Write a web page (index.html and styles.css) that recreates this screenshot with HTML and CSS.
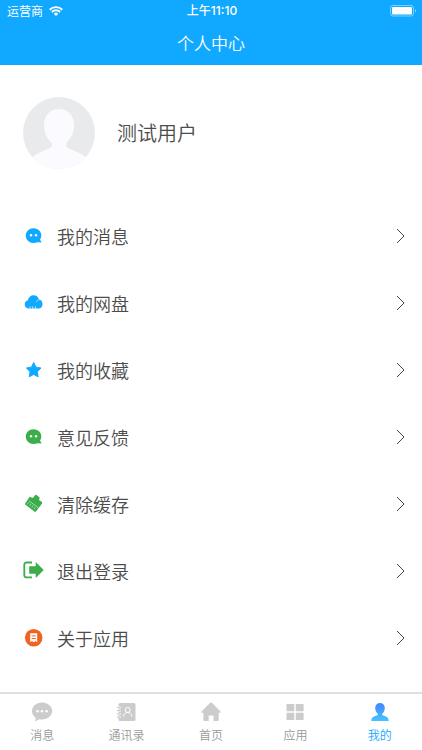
FILE: index.html
```html
<!DOCTYPE html>
<html lang="zh-CN">
<head>
    <meta charset="UTF-8">
    <meta name="viewport" content="width=device-width, initial-scale=1.0">
    <title>个人中心</title>
    <link rel="stylesheet" href="styles.css">
</head>
<body>
    <header>
        <div class="status-bar">
            <div class="carrier">
                <span>运营商</span>
                <svg width="14" height="10" viewBox="0 0 14 10" fill="none" stroke="#fff" stroke-width="1.9">
                    <path d="M.7 3.700a9 9 0 0 1 12.600 0M2.900 6a5.800 5.800 0 0 1 8.200 0"/>
                    <path d="M7 10 4.800 7.700a3.100 3.100 0 0 1 4.400 0z" fill="#fff" stroke="none"/>
                </svg>
            </div>
            <div class="time">上午11:10</div>
            <div class="battery">
                <svg width="27" height="12" viewBox="0 0 27 12">
                    <rect x=".5" y=".5" width="23" height="10.5" rx="2.5" fill="none" stroke="#fff" stroke-opacity=".45"/>
                    <rect x="2" y="2" width="20" height="7.5" rx="1" fill="#fff"/>
                    <path d="M25 4v3.600c1.600-.6 1.600-3 0-3.600z" fill="#fff" fill-opacity=".5"/>
                </svg>
            </div>
        </div>
        <h1>个人中心</h1>
    </header>

    <main>
        <section class="profile">
            <svg class="avatar" viewBox="0 0 72 72">
                <defs>
                    <clipPath id="avatar-clip"><circle cx="36" cy="36" r="36"/></clipPath>
                </defs>
                <g clip-path="url(#avatar-clip)">
                    <rect width="72" height="72" fill="#e8eaeb"/>
                    <path d="M36 12c9 0 15 6.500 15 16 0 7-2.500 13-7 17-2 2.500-1 5 2 6.500 6 3 12 4.500 17 9V72H9V60.500c5-4.500 11-6 17-9 3-1.500 4-4 2-6.500-4.500-4-7-10-7-17 0-9.500 6-16 15-16z" fill="#fbfbff"/>
                </g>
            </svg>
            <h2>测试用户</h2>
        </section>

        <nav class="menu">
            <a href="#">
                <svg class="icon blue" viewBox="0 0 20 20">
                    <path d="M9.500 2.200c4.300 0 7.800 2.900 7.800 7 0 1.900-.6 3.200-1.300 4.300l1.600 3-4.300-.2c-1 .5-2.400.7-3.800.7-4.300 0-7.700-3.300-7.700-7.500s3.400-7.300 7.700-7.300z"/>
                    <circle cx="7" cy="9.200" r="1.200" fill="#fff"/>
                    <circle cx="12" cy="9.200" r="1.200" fill="#fff"/>
                </svg>
                <span>我的消息</span>
                <svg class="arrow" viewBox="0 0 10 16"><path d="M1 1l7 7-7 7"/></svg>
            </a>
            <a href="#">
                <svg class="icon blue" viewBox="0 0 20 20">
                    <path d="M4.800 15.500C2.500 15.500.7 13.700.7 11.200c0-2 1.300-3.600 3.200-4C4.500 4.200 6.700 2.200 9.500 2.200c2.600 0 4.800 1.600 5.500 4.200 2.300.2 3.500 2.400 3.500 4.800 0 2.500-1.600 4.300-3.900 4.300z"/>
                    <path d="M6 13.500v2M8.700 13.500v2M11.400 13.500v2" stroke="#fff" stroke-width=".8"/>
                    <path d="M12.300 9c.5-1.300 1.500-2.200 2.900-2.200" fill="none" stroke="#fff" stroke-width=".6"/>
                </svg>
                <span>我的网盘</span>
                <svg class="arrow" viewBox="0 0 10 16"><path d="M1 1l7 7-7 7"/></svg>
            </a>
            <a href="#">
                <svg class="icon blue" viewBox="0 0 20 20">
                    <path d="M9.700 2.500l2.300 4.700 5 .8-3.700 3.700.8 5.100-4.400-2.400-4.400 2.400.8-5.100L2.400 8l5-.8z" stroke="#10a9ff" stroke-linejoin="round"/>
                </svg>
                <span>我的收藏</span>
                <svg class="arrow" viewBox="0 0 10 16"><path d="M1 1l7 7-7 7"/></svg>
            </a>
            <a href="#">
                <svg class="icon green" viewBox="0 0 20 20">
                    <path d="M9.500 2.200c4.300 0 7.800 2.900 7.800 7 0 1.900-.6 3.200-1.300 4.300l1.600 3-4.300-.2c-1 .5-2.400.7-3.800.7-4.300 0-7.700-3.300-7.700-7.500s3.400-7.300 7.700-7.300z"/>
                    <circle cx="7" cy="9.200" r="1.200" fill="#fff"/>
                    <circle cx="12" cy="9.200" r="1.200" fill="#fff"/>
                </svg>
                <span>意见反馈</span>
                <svg class="arrow" viewBox="0 0 10 16"><path d="M1 1l7 7-7 7"/></svg>
            </a>
            <a href="#">
                <svg class="icon green" viewBox="0 0 20 20">
                    <path d="M5.600 2.800l3.200 1.200 2.500-2.900c.4-.4.9-.4 1.300-.1l2.700 2.200c.4.300.4.600.3 1l-.6 1.900 2.700 1.700c.6.500.7 1.300.2 1.900l-6 7.700c-.4.600-1 .6-1.500.2L1.500 10.800c-.5-.4-.5-1-.1-1.500z"/>
                    <path d="M5 7l9 6.500M4.500 8.500l-1 1.800M6.800 10l-1.200 2M9 11.600l-1.200 2M11.200 13.200l-1.200 2" fill="none" stroke="#fff" stroke-width=".7" stroke-opacity=".75"/>
                </svg>
                <span>清除缓存</span>
                <svg class="arrow" viewBox="0 0 10 16"><path d="M1 1l7 7-7 7"/></svg>
            </a>
            <a href="#">
                <svg class="icon green" viewBox="0 0 20 20">
                    <path d="M8 1.500H2.500A2.200 2.200 0 0 0 .3 3.700v10.500A2.200 2.200 0 0 0 2.500 16.400H8" fill="none" stroke="#3bae4a" stroke-width="1.800"/>
                    <path d="M11.700.9l8 8.100-8 8.100V12.700H5.200V5.300h6.500z"/>
                </svg>
                <span>退出登录</span>
                <svg class="arrow" viewBox="0 0 10 16"><path d="M1 1l7 7-7 7"/></svg>
            </a>
            <a href="#">
                <svg class="icon orange" viewBox="0 0 20 20">
                    <circle cx="9.700" cy="9.700" r="8.800"/>
                    <path d="M6.200 5.200h7v9l-1.800-1.200-1.700 1.200L8 13l-1.800 1.200z" fill="#fff"/>
                    <path d="M7.700 7.900h4M7.700 10.500h4" stroke="#f26322"/>
                </svg>
                <span>关于应用</span>
                <svg class="arrow" viewBox="0 0 10 16"><path d="M1 1l7 7-7 7"/></svg>
            </a>
        </nav>
    </main>

    <footer>
        <a href="#">
            <svg viewBox="0 0 20 20">
                <path d="M10 .5c5.700 0 10.200 3.700 10.200 8.500s-4.500 8.500-10.200 8.500c-1 0-2-.1-3-.3L3.500 19.500v-4C1.300 14 0 11.700 0 9 0 4.200 4.300.5 10 .5z"/>
                <g fill="#fff"><circle cx="5.500" cy="9.200" r="1.300"/><circle cx="10" cy="9.200" r="1.300"/><circle cx="14.500" cy="9.200" r="1.300"/></g>
            </svg>
            <span>消息</span>
        </a>
        <a href="#">
            <svg viewBox="0 0 20 20">
                <rect x="1.500" y="1" width="17" height="18" rx="1.500"/>
                <g fill="none" stroke="#fff">
                    <circle cx="10.700" cy="8" r="2.500"/>
                    <path d="M6.500 14.500c.2-2.500 1.800-4 4.200-4s4 1.500 4.200 4"/>
                </g>
                <path d="M0 5.500h3.500M0 8.700h3.500M0 11.900h3.500M0 15.100h3.500" stroke="#fff" stroke-width="2"/>
                <path d="M0 5.500h3M0 8.700h3M0 11.900h3M0 15.100h3" stroke="#ccc" stroke-width="1.200"/>
            </svg>
            <span>通讯录</span>
        </a>
        <a href="#">
            <svg viewBox="0 0 20 20">
                <path d="M10 .5c.3 0 .6.100.8.300l8.700 8.700c.5.500.2 1.200-.5 1.200h-1.300V18c0 .6-.3 1-.9 1h-4.300v-5.500H7.700V19H3.300c-.6 0-.9-.4-.9-1v-7.300H1c-.7 0-1-.7-.5-1.200L9.200.8c.2-.2.500-.3.800-.3z"/>
            </svg>
            <span>首页</span>
        </a>
        <a href="#">
            <svg viewBox="0 0 20 20">
                <path d="M1.500 2h7.800v7.200H1.500zM10.800 2h7.800v7.200h-7.800zM1.500 10.800h7.800V18H1.500zM10.800 10.800h7.800V18h-7.800z"/>
            </svg>
            <span>应用</span>
        </a>
        <a href="#" class="active">
            <svg viewBox="0 0 20 20">
                <defs>
                    <linearGradient id="me" x1="0" y1="0" x2="0" y2="1">
                        <stop offset="0" stop-color="#4385ff"/>
                        <stop offset="1" stop-color="#45c4ff"/>
                    </linearGradient>
                </defs>
                <path d="M10 1c3 0 4.800 2 4.800 5 0 2.200-.9 4.300-2.400 5.600-.5.900-.2 1.600.8 2 2.500.9 5 1.500 5.600 4.900 0 .3-.2.500-.5.500H1.700c-.3 0-.5-.2-.5-.5.600-3.400 3.100-4 5.600-4.900 1-.4 1.300-1.100.8-2C6.100 10.300 5.200 8.200 5.200 6c0-3 1.800-5 4.800-5z" fill="url(#me)"/>
            </svg>
            <span>我的</span>
        </a>
    </footer>
</body>
</html>
```
FILE: styles.css
```css
* {
    box-sizing: border-box;
}
body {
    font-family: "Noto Sans CJK SC", sans-serif;
    font-weight: 350;
    background-color: white;
    color: #4c4c4c;
    margin: 0;
    min-height: 100vh;
    display: flex;
    flex-direction: column;
}
a {
    color: inherit;
    text-decoration: none;
}
svg {
    display: block;
    flex: none;
    overflow: visible;
}
header {
    background-color: #10a9ff;
    color: white;
    height: 65px;
}
.status-bar {
    display: grid;
    grid-template-columns: 1fr auto 1fr;
    align-items: center;
    height: 22px;
    padding: 0 5px 0 7px;
    font-size: 12px;
    font-weight: 400;
    line-height: 22px;
}
.carrier {
    display: flex;
    align-items: center;
    gap: 6px;
}
.time {
    font-family: Inter, "Noto Sans CJK SC", sans-serif;
    font-weight: 500;
}
.battery {
    justify-self: end;
}
h1 {
    margin: 0;
    font-size: 17px;
    font-weight: 350;
    line-height: 42px;
    text-align: center;
}
main {
    flex: 1;
}
.profile {
    display: flex;
    align-items: center;
    gap: 22px;
    padding: 32px 23px 33px;
}
.avatar {
    width: 72px;
    height: 72px;
}
h2 {
    margin: 0;
    font-size: 20px;
    font-weight: 350;
    line-height: 30px;
}
.menu a {
    display: flex;
    align-items: center;
    height: 67px;
    padding: 0 16px 0 24px;
    font-size: 18px;
}
.menu span {
    flex: 1;
    margin-left: 13px;
}
.icon {
    width: 20px;
    height: 20px;
}
.blue {
    fill: #10a9ff;
}
.green {
    fill: #3bae4a;
}
.orange {
    fill: #f26322;
}
.arrow {
    width: 10px;
    height: 16px;
    fill: none;
    stroke: #444;
}
footer {
    display: flex;
    height: 58px;
    border-top: 2px solid #e0e0e0;
}
footer a {
    flex: 1;
    display: flex;
    flex-direction: column;
    align-items: center;
    padding-top: 8px;
    font-size: 12px;
    line-height: 26px;
    color: #999;
}
footer svg {
    width: 20px;
    height: 20px;
    fill: #ccc;
}
footer .active {
    color: #10a9ff;
}
```
